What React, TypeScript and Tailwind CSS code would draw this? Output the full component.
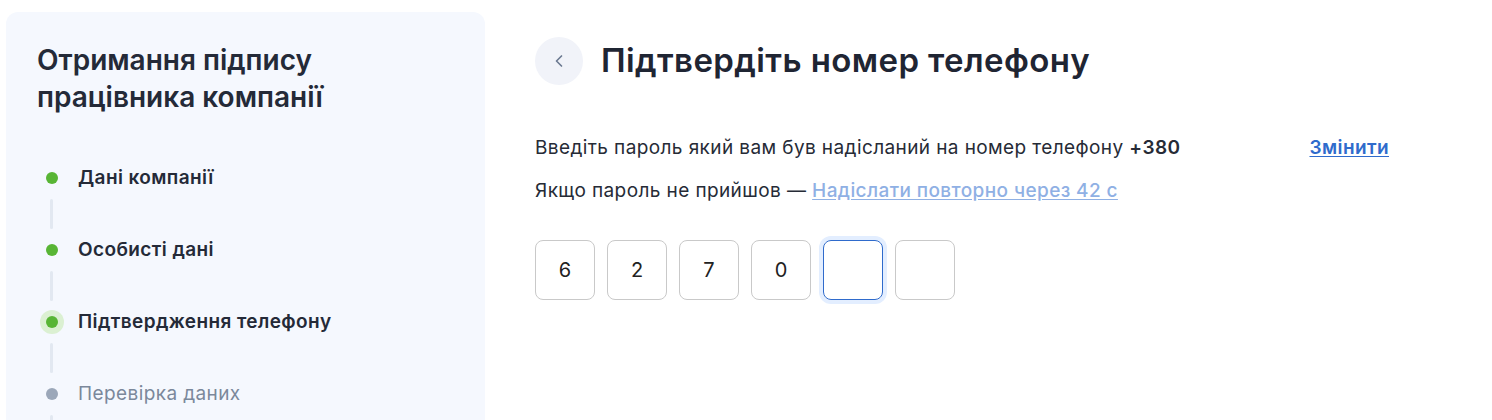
import { ChevronLeft } from "lucide-react";

const steps = [
  { label: "Дані компанії", state: "done" },
  { label: "Особисті дані", state: "done" },
  { label: "Підтвердження телефону", state: "active" },
  { label: "Перевірка даних", state: "todo" },
];

const code = ["6", "2", "7", "0", "", ""];

export default function App() {
  return (
    <div
      className="flex h-[420px] w-[1492px] overflow-hidden bg-white"
      style={{ fontFamily: "Inter, 'Noto Sans', sans-serif" }}
    >
      {/* Sidebar */}
      <aside className="ml-[6px] mt-3 w-[479px] shrink-0 rounded-t-xl bg-[#f5f8fe] pl-[31px] pt-[30px]">
        <h1 className="text-[28px] font-semibold leading-[37px] text-[#242a38]">
          Отримання підпису
          <br />
          працівника компанії
        </h1>
        <ul className="mt-[50px] flex flex-col">
          {steps.map((s) => (
            <li key={s.label} className="flex flex-col">
              <div className="flex h-6 items-center">
                <div className="flex w-[29px] justify-center">
                  {s.state === "active" ? (
                    <span className="flex size-6 items-center justify-center rounded-full bg-[#dbf0d2]">
                      <span className="size-3 rounded-full bg-[#58b535]" />
                    </span>
                  ) : (
                    <span
                      className={
                        s.state === "done"
                          ? "size-3 rounded-full bg-[#58b535]"
                          : "size-3 rounded-full bg-[#9ba7b9]"
                      }
                    />
                  )}
                </div>
                <span
                  className={
                    s.state === "todo"
                      ? "ml-[12px] text-[19px] tracking-[0.4px] text-[#7b889b]"
                      : "ml-[12px] text-[19px] font-semibold tracking-[0.4px] text-[#242a38]"
                  }
                >
                  {s.label}
                </span>
              </div>
              <div className="flex w-[29px] justify-center py-[9px]">
                <span className="h-[30px] w-[3px] rounded-full bg-[#e2e8f1]" />
              </div>
            </li>
          ))}
        </ul>
      </aside>

      {/* Main */}
      <main className="ml-[50px] w-[854px] pt-9">
        <div className="flex items-center gap-[18px]">
          <button className="flex size-12 items-center justify-center rounded-full bg-[#f1f3f9] text-[#6c7a91]">
            <ChevronLeft className="size-5" strokeWidth={2} />
          </button>
          <h2 className="text-[33px] font-semibold tracking-[0.4px] text-[#1f2533]">
            Підтвердіть номер телефону
          </h2>
        </div>

        <div className="mt-[50px] flex items-center justify-between text-[19px] leading-6 tracking-[0.4px] text-[#262b36]">
          <p>
            Введіть пароль який вам був надісланий на номер телефону{" "}
            <span className="font-semibold">+380</span>
          </p>
          <a className="font-semibold text-[#2f6bcc] underline underline-offset-2">
            Змінити
          </a>
        </div>
        <p className="mt-[19px] text-[19px] leading-6 tracking-[0.4px] text-[#262b36]">
          Якщо пароль не прийшов —{" "}
          <a className="font-medium text-[#8fb0e4] underline underline-offset-2">
            Надіслати повторно через 42 с
          </a>
        </p>

        <div className="mt-[37px] flex gap-3">
          {code.map((d, i) => (
            <div
              key={i}
              className={
                i === 4
                  ? "flex h-[60px] w-[60px] items-center justify-center rounded-lg border border-[#2f6bcc] text-[20px] text-[#222] ring-4 ring-[#e3eeff]"
                  : "flex h-[60px] w-[60px] items-center justify-center rounded-lg border border-[#c9c9c9] text-[20px] text-[#222]"
              }
            >
              {d}
            </div>
          ))}
        </div>
      </main>
    </div>
  );
}
